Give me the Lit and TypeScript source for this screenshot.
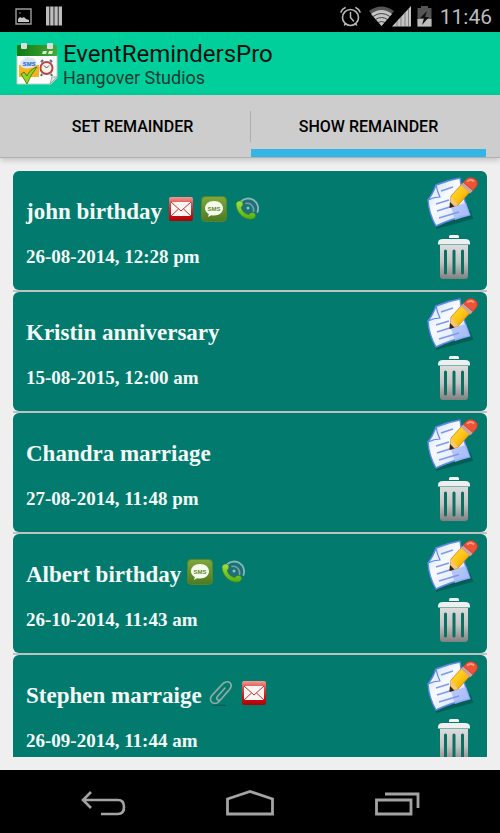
import { LitElement, html, css, svg } from "lit";
import { customElement, property, state } from "lit/decorators.js";
import { classMap } from "lit/directives/class-map.js";

type Channel = "mail" | "sms" | "call" | "clip";

interface Reminder {
  title: string;
  when: string;
  channels: Channel[];
}

const REMINDERS: Reminder[] = [
  { title: "john birthday", when: "26-08-2014, 12:28 pm", channels: ["mail", "sms", "call"] },
  { title: "Kristin anniversary", when: "15-08-2015, 12:00 am", channels: [] },
  { title: "Chandra marriage", when: "27-08-2014, 11:48 pm", channels: [] },
  { title: "Albert birthday", when: "26-10-2014, 11:43 am", channels: ["sms", "call"] },
  { title: "Stephen marraige", when: "26-09-2014, 11:44 am", channels: ["clip", "mail"] },
];

const channelArt = {
  mail: svg`
    <defs><linearGradient id="m" x1="0" y1="0" x2="0" y2="1">
      <stop offset="0" stop-color="#f09a94"/><stop offset=".3" stop-color="#e04a48"/>
      <stop offset=".65" stop-color="#d81014"/><stop offset="1" stop-color="#a80508"/>
    </linearGradient></defs>
    <rect x="1" y="1" width="24" height="24" rx="2" fill="url(#m)"/>
    <path d="M3 6h20v14H3z" fill="#fbf6f4"/>
    <path d="M3 6l10 9 10-9M3 20l7.500-7M23 20l-7.500-7" fill="none" stroke="#c43330" stroke-width="1"/>`,
  sms: svg`
    <defs><linearGradient id="s" x1="0" y1="0" x2="0" y2="1">
      <stop offset="0" stop-color="#7fa83c"/><stop offset="1" stop-color="#4d7a22"/>
    </linearGradient></defs>
    <rect x=".5" y=".5" width="25" height="25" rx="4" fill="url(#s)" stroke="#5a8428"/>
    <path d="M13 5c5.500 0 9 3.200 9 7.300S18.500 19.500 13 19.500c-1 0-2-.1-2.800-.3L7 21l.8-3C5.500 16.800 4 14.800 4 12.300 4 8.200 7.500 5 13 5z" fill="#f6faec"/>
    <text x="13" y="15" text-anchor="middle" font-family="Liberation Sans, sans-serif" font-weight="700" font-size="6" fill="#5f8a2c">SMS</text>`,
  call: svg`
    <defs><linearGradient id="c" x1="0" y1="0" x2="0" y2="1">
      <stop offset="0" stop-color="#a4e04a"/><stop offset="1" stop-color="#4fae12"/>
    </linearGradient></defs>
    <circle cx="14" cy="13" r="10.500" fill="#1d6f78"/>
    <path d="M7 5.500a10 10 0 0 1 16.500 10.500" fill="none" stroke="#86b9b8" stroke-width="1.800" stroke-linecap="round"/>
    <path d="M12 7.500a6.500 6.500 0 0 1 7.500 8" fill="none" stroke="#6ba6a6" stroke-width="1.500" stroke-linecap="round"/>
    <circle cx="14" cy="12" r="1.500" fill="#8fc4c2"/>
    <path d="M2 8c.5-2.500 3.500-4 5.500-2.500s1.800 4.500-.2 5.500c.2 3.500 3.500 7 7.700 7.500 1-2.200 4-2.800 5.700-1.200s1 4.700-1.400 5.500C13 25 2.500 19 2 8z" fill="url(#c)" stroke="#378010" stroke-width=".6"/>`,
  clip: svg`
    <path d="M5 25.500h13" stroke="#035f55" stroke-width="1.500"/>
    <path d="M20 11l-8.500 10c-2 2.300-5.200 3.200-7.500 1.400-2.400-2-1.800-5 .2-7.300L14 4.600c2-2.300 5.400-3.800 7.800-1.900 2.300 2 1.300 5-.6 7.300l-8 9c-1.200 1.300-2.700 1.600-3.700.7s-.8-2.400.3-3.700L17 8" fill="none" stroke="#93aaa6" stroke-width="1.600" stroke-linecap="round"/>`,
};

const channelLabel = { mail: "Email", sms: "Text message", call: "Call", clip: "Attachment" };

const editArt = html`<svg class="edit-art" viewBox="0 0 54 54" aria-hidden="true">
  <defs>
    <linearGradient id="paper" x1="0" y1="0" x2="1" y2="1">
      <stop offset="0" stop-color="#c4d6ff"/><stop offset=".4" stop-color="#f8faff"/>
      <stop offset=".65" stop-color="#e6edff"/><stop offset="1" stop-color="#8fa9f2"/>
    </linearGradient>
    <linearGradient id="wood" x1="0" y1="0" x2="1" y2="1">
      <stop offset="0" stop-color="#ffe14a"/><stop offset=".5" stop-color="#ffc413"/><stop offset="1" stop-color="#e58a00"/>
    </linearGradient>
  </defs>
  <path d="M9 52l36-10-2-6-1 2z" fill="#03463f" stroke="#03463f" stroke-width="2" opacity=".5"/>
  <path d="M9 9q12-5 24-7 2 18 10 37-17 3-34 11Q2 38 1 24 6 18 9 9z" fill="url(#paper)" stroke="#5f88e6" stroke-width="1.400" stroke-linejoin="round"/>
  <path d="M24 31l15-4 4 12-15 5z" fill="#a6baf8" opacity=".8"/>
  <path d="M9 9q1 6 4 12-6 0-12 3 5-6 8-15z" fill="#e8f0ff" stroke="#5d86e5" stroke-width="1.200" stroke-linejoin="round"/>
  <path d="M14 15l12-4M9 28l13-4M10 35l16-5M12 42l20-6" stroke="#7f9be8" stroke-width="1.800"/>
  <path d="M23 31l1-11L35 8l8 8-12 13z" fill="url(#wood)" stroke="#c98408" stroke-width=".8"/>
  <path d="M23 31l1-11 7 9z" fill="#f3c77c"/>
  <path d="M22.500 32l.5-6 4.500 4.500z" fill="#33261c"/>
  <path d="M34 9l3.500-4 9 9-3.500 3.500z" fill="#d0a39a"/>
  <path d="M36.500 6.500l3-3.500Q45-1 50 5q1 4-1 6l-3 3.500z" fill="#ee5338" stroke="#c43c26" stroke-width=".8"/>
  <path d="M40 5.500q4-3 7 0" stroke="#ff9b80" stroke-width="1.800" fill="none"/>
</svg>`;

const trashArt = html`<svg class="trash-art" viewBox="0 0 34 46" aria-hidden="true">
  <defs>
    <linearGradient id="can" x1="0" y1="0" x2="0" y2="1">
      <stop offset="0" stop-color="#dcdcdc"/><stop offset=".5" stop-color="#c4c4c4"/><stop offset="1" stop-color="#808080"/>
    </linearGradient>
  </defs>
  <path d="M12 4V2.500Q12 1 13.500 1h7Q22 1 22 2.500V4z" fill="#f4f4f4"/>
  <path d="M1 10.500V9q0-4 5-4h22q5 0 5 4v1.500z" fill="#efefef"/>
  <path d="M3 11h28v31q0 3-3 3H6q-3 0-3-3z" fill="url(#can)"/>
  <path d="M8.500 17v22M17 17v22M25.500 17v22" stroke="#0c6f63" stroke-width="3" stroke-linecap="round"/>
</svg>`;

@customElement("reminder-card")
class ReminderCard extends LitElement {
  @property({ attribute: false }) item!: Reminder;

  static styles = css`
    :host { display: block; border-bottom: 2px solid #bcc3c1; }
    .card {
      display: flex;
      justify-content: space-between;
      height: 119px;
      box-sizing: border-box;
      padding: 5px 6px 8px 13px;
      border-radius: 6px;
      background: #037a6e;
      color: #f4faf8;
      font-family: "Liberation Serif", serif;
      font-weight: 700;
    }
    .info { min-width: 0; padding-top: 20px; }
    .heading { display: flex; align-items: flex-start; }
    .title { margin: 0; font-size: 23px; line-height: 32px; white-space: nowrap; }
    .channels { display: flex; gap: 7px; margin-left: 6px; }
    .channels svg { display: block; width: 26px; height: 26px; }
    .when { display: block; margin-top: 17px; font-size: 19px; line-height: 24px; white-space: nowrap; }
    .actions { display: flex; flex-direction: column; align-items: center; gap: 4px; }
    button { display: block; padding: 0; border: 0; background: none; cursor: pointer; }
    svg { display: block; }
    .edit-art { width: 54px; height: 54px; }
    .trash-art { width: 34px; height: 46px; }
  `;

  render() {
    const { title, when, channels } = this.item;
    return html`<article class="card">
      <div class="info">
        <div class="heading">
          <h2 class="title">${title}</h2>
          <div class="channels">
            ${channels.map((c) => html`<svg viewBox="0 0 26 26" role="img" aria-label=${channelLabel[c]}>${channelArt[c]}</svg>`)}
          </div>
        </div>
        <time class="when">${when}</time>
      </div>
      <div class="actions">
        <button aria-label="Edit ${title}">${editArt}</button>
        <button aria-label="Delete ${title}">${trashArt}</button>
      </div>
    </article>`;
  }
}

@customElement("app-root")
class AppRoot extends LitElement {
  @state() private tab = 1;

  static styles = css`
    :host {
      display: flex;
      flex-direction: column;
      height: 100vh;
      background: #efefef;
      font-family: Roboto, sans-serif;
    }
    svg { display: block; }
    .status {
      display: flex;
      flex: none;
      align-items: center;
      justify-content: space-between;
      height: 32px;
      padding: 0 8px 0 15px;
      background: #000;
      color: #bcbcbc;
    }
    .group { display: flex; align-items: center; }
    .left { gap: 14px; }
    .clock { margin-left: 8px; padding-top: 2px; font-size: 21px; line-height: 30px; }
    .wifi { margin-left: 8px; }
    .battery { margin-left: 6px; }
    .app-bar {
      display: flex;
      flex: none;
      align-items: center;
      gap: 5px;
      height: 63px;
      padding-left: 16px;
      background: #00cf9c;
    }
    .brand { padding-top: 3px; }
    .name { margin: 0; font-size: 24px; line-height: 26px; font-weight: 400; color: #06110e; }
    .studio { margin: 0; font-size: 18px; line-height: 22px; color: #1d3a33; }
    .tabs {
      display: flex;
      flex: none;
      height: 62px;
      padding: 0 14px 0 15px;
      background: #cdcdcd;
      border-bottom: 1px solid #b0b0b0;
      box-shadow: 0 2px 6px #0003;
    }
    .tab {
      flex: 1;
      padding: 10px 0 0;
      border: 0;
      border-bottom: 8px solid transparent;
      background: none;
      color: #000;
      font: 500 16px/20px Roboto, sans-serif;
      cursor: pointer;
    }
    .tab.active { border-bottom-color: #33b5e5; }
    .divider { width: 1px; height: 31px; margin-top: 16px; background: #adadad; }
    main { display: flex; flex: 1; min-height: 0; padding: 13px; }
    .list { flex: 1; margin: 0; padding: 0; list-style: none; overflow-y: auto; scrollbar-width: none; }
    .nav {
      display: flex;
      flex: none;
      align-items: center;
      justify-content: center;
      gap: 96px;
      height: 63px;
      box-sizing: border-box;
      padding-top: 4px;
      background: #000;
    }
    .nav button { padding: 0; border: 0; background: none; cursor: pointer; }
  `;

  private renderTab(label: string, index: number) {
    return html`<button
      role="tab"
      aria-selected=${this.tab === index}
      class=${classMap({ tab: true, active: this.tab === index })}
      @click=${() => (this.tab = index)}
    >${label}</button>`;
  }

  render() {
    return html`
      <div class="status">
        <div class="group left">
          <svg width="17" height="17" viewBox="0 0 17 17"><path d="M1 1h15v15H1z" fill="none" stroke="#9c9c9c" stroke-width="1.400"/><path d="M3 14v-3l2-2 2 1 2-1 2 2 3 1v2z" fill="#c6c6c6"/><path d="M4 5h2" stroke="#555" stroke-width="1.500"/></svg>
          <svg width="16" height="20" viewBox="0 0 16 20"><path d="M0 .5h3.400v19H0zM4.200.5h3.400v19H4.200zM8.400.5h3.400v19H8.400zM12.600.5H16v19h-3.400z" fill="#bdbdbd"/></svg>
        </div>
        <div class="group">
          <svg width="21" height="21" viewBox="0 0 21 21" fill="none" stroke="#b8b8b8" stroke-linecap="round"><circle cx="10.500" cy="11.500" r="8" stroke-width="1.600"/><path d="M10.500 6.500v5l3 3.500M4.500 19l1.500-1.500M16.500 19L15 17.500" stroke-width="1.500"/><path d="M1 6c.6-2 2-3.500 4-4.300M20 6c-.6-2-2-3.500-4-4.300" stroke-width="1.600"/></svg>
          <svg class="wifi" width="42" height="21" viewBox="0 0 42 21"><path d="M0 5Q12 -4 25 5L12.500 20z" fill="#555"/><path d="M2 8Q12.500 0 23 8L12.500 20z" fill="#c4c4c4"/><path d="M4 10.500q8.500-6 17 0M6.500 13.500q6-4 12 0M9 16.500q3.500-2 7 0" stroke="#222" stroke-width=".8" fill="none"/><path d="M42 0v20.500H23z" fill="#c4c4c4"/><path d="M28 15v6M32 11v10M36 6v15M39.500 3v18" stroke="#555" stroke-width=".6"/></svg>
          <svg class="battery" width="15" height="21" viewBox="0 0 15 21"><path d="M4 0h7v2h3.500v18.500H.5V2H4z" fill="#555"/><path d="M.5 13h14v7.500H.5z" fill="#bdbdbd"/><path d="M10 5l-7 7h4l-2 7 7-8H8z" fill="#111"/></svg>
          <span class="clock">11:46</span>
        </div>
      </div>
      <header class="app-bar">
        <svg width="42" height="42" viewBox="0 0 42 42" aria-hidden="true">
          <defs>
            <linearGradient id="top" x1="0" y1="0" x2="1" y2="0"><stop offset="0" stop-color="#0c7a10"/><stop offset="1" stop-color="#4aa838"/></linearGradient>
          </defs>
          <path d="M1 12h40v23l-6 6H1z" fill="#fbfbfb" stroke="#c4cfc8"/>
          <path d="M41 34h-5l-2 7z" fill="#e4e8e4" stroke="#8d9a92" stroke-width=".8"/>
          <path d="M1 3q0-1 1-1h38q1 0 1 1v10H1z" fill="url(#top)"/>
          <path d="M27 8h4l-1 3h-4zM33 8h4l-1 3h-4z" fill="#d7efd0"/>
          <rect x="5" y="0" width="6" height="6" rx="1" fill="#dadeda"/><rect x="31" y="0" width="6" height="6" rx="1" fill="#dadeda"/>
          <path d="M3 22h20v12H3z" fill="#f6b51f"/>
          <path d="M4 21q0-3 3-4 3-5 8-2 4 0 5 4 1 6-6 6-8 2-10-4z" fill="#d9e4ee"/>
          <text x="13" y="23" text-anchor="middle" font-family="Liberation Sans, sans-serif" font-weight="700" font-style="italic" font-size="6" fill="#1765d4">SMS</text>
          <path d="M5 31l3-2 3 4q3-7 10-9-6 7-10 17z" fill="#8ed61f" stroke="#336d08" stroke-width=".8"/>
          <path d="M25 19l2-2M36 19l-2-2M26 31l-1 2M35 31l1 2" stroke="#476a96" stroke-width="2"/>
          <circle cx="30.500" cy="25" r="6" fill="#f4f1ef" stroke="#b5483e" stroke-width="2"/>
          <path d="M30.500 25l-2.500-2.500M30.500 25l2.500-2.500" stroke="#555"/>
        </svg>
        <div class="brand">
          <h1 class="name">EventRemindersPro</h1>
          <p class="studio">Hangover Studios</p>
        </div>
      </header>
      <div class="tabs" role="tablist">
        ${this.renderTab("SET REMAINDER", 0)}
        <span class="divider"></span>
        ${this.renderTab("SHOW REMAINDER", 1)}
      </div>
      <main>
        <ul class="list">
          ${REMINDERS.map((item) => html`<li><reminder-card .item=${item}></reminder-card></li>`)}
        </ul>
      </main>
      <nav class="nav">
        <button aria-label="Back"><svg width="52" height="28" viewBox="0 0 52 28" fill="none" stroke="#a3a3a3" stroke-width="2.600"><path d="M14 2L6 10l8 8M6 10h35q6 0 6 7t-6 7H24"/></svg></button>
        <button aria-label="Home"><svg width="50" height="28" viewBox="0 0 50 28" fill="none" stroke="#a3a3a3" stroke-width="2.800"><path d="M2.500 24V9L25 1.500 47.500 9v15z"/></svg></button>
        <button aria-label="Recent apps"><svg width="52" height="28" viewBox="0 0 52 28" fill="none" stroke="#a3a3a3" stroke-width="2.800"><path d="M5.500 10h34.500v14H5.500zM14 4h33v14"/></svg></button>
      </nav>
    `;
  }
}
